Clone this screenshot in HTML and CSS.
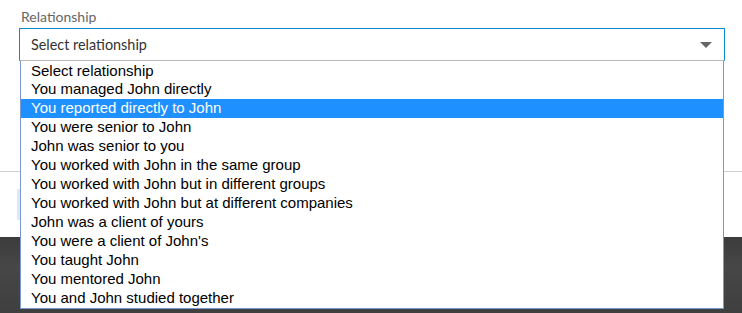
FILE: index.html
```html
<!DOCTYPE html>
<html lang="en">
<head>
  <meta charset="UTF-8">
  <title>Relationship</title>
  <link rel="stylesheet" href="styles.css">
</head>
<body>
  <div class="modal">
    <div class="field">
      <label class="field-label">Relationship</label>
      <div class="select">
        <span class="select-value">Select relationship</span>
        <span class="select-arrow"></span>
      </div>
    </div>

    <div class="modal-footer">
      <div class="footer-btn"></div>
    </div>
  </div>

  <div class="backdrop"></div>

  <!-- open dropdown list -->
  <ul class="options">
    <li>Select relationship</li>
    <li>You managed John directly</li>
    <li class="selected">You reported directly to John</li>
    <li>You were senior to John</li>
    <li>John was senior to you</li>
    <li>You worked with John in the same group</li>
    <li>You worked with John but in different groups</li>
    <li>You worked with John but at different companies</li>
    <li>John was a client of yours</li>
    <li>You were a client of John's</li>
    <li>You taught John</li>
    <li>You mentored John</li>
    <li>You and John studied together</li>
  </ul>
</body>
</html>
```
FILE: styles.css
```css
body {
  margin: 0;
  background: #fff;
  font-family: Lato, "Open Sans", sans-serif;
}

.modal {
  height: 237px;
  background: #fff;
}

.field {
  padding: 8px 17px 0 19px;
}

.field-label {
  display: block;
  font-size: 14px;
  color: #666;
  padding-left: 2px;
  height: 20px;
}

.select {
  display: flex;
  align-items: center;
  justify-content: space-between;
  height: 31px;
  border: 1px solid #0a8acb;
  border-bottom-color: #b8b8b8;
  padding: 0 12px 0 11px;
}

.select-value {
  font-size: 14.4px;
  color: #333;
}

.select-arrow {
  width: 0;
  height: 0;
  border-left: 6px solid transparent;
  border-right: 6px solid transparent;
  border-top: 6px solid #666;
}

.modal-footer {
  margin-top: 110px;
  border-top: 1px solid #d0d0d0;
  padding: 17px 0 0 17px;
}

.footer-btn {
  width: 120px;
  height: 31px;
  background: #dbeaf6;
}

.backdrop {
  height: 76px;
  background: linear-gradient(to bottom, #3c3c3c, #474747 40%, #3f3f3f);
}

.options {
  position: absolute;
  top: 61px;
  left: 20px;
  width: 702px;
  margin: 0;
  padding: 0;
  list-style: none;
  background: #fff;
  border: 1px solid #7a98d4;
  border-top: none;
  font-family: "Liberation Sans", Arial, sans-serif;
  font-size: 15px;
  color: #000;
}

.options li {
  height: 19px;
  line-height: 18px;
  padding-left: 10px;
}

.options li:first-child {
  line-height: 20px;
}

.options .selected {
  background: #1e90ff;
  color: #fff;
}
```
